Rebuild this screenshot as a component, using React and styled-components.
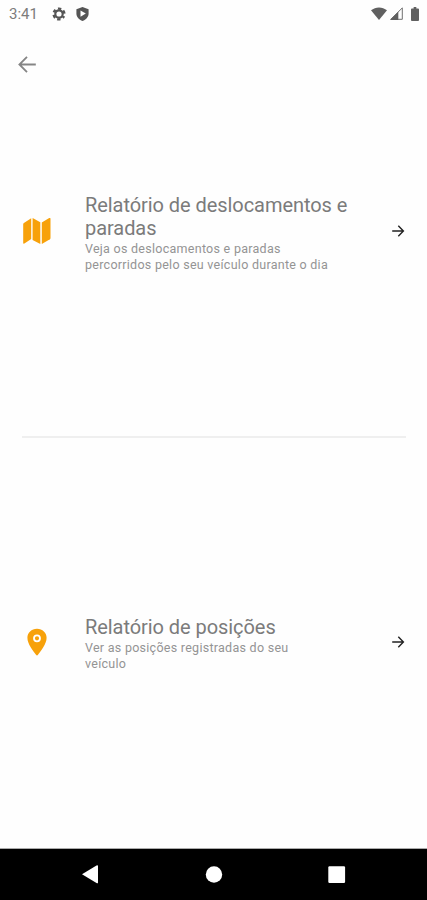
import React from "react";
import styled, { createGlobalStyle } from "styled-components";

const GlobalStyle = createGlobalStyle`
  * { box-sizing: border-box; }
  body { margin: 0; background: #fefefe; font-family: Roboto, sans-serif; }
`;

const Screen = styled.div`
  width: 427px;
  height: 900px;
  display: flex;
  flex-direction: column;
  background: #fefefe;
  position: relative;
  overflow: hidden;
`;

const StatusBar = styled.div`
  height: 27px;
  flex: none;
  display: flex;
  align-items: center;
  justify-content: space-between;
  padding: 0 8px 0 9px;
  color: #606060;
`;

const StatusGroup = styled.div`
  display: flex;
  align-items: center;
  gap: ${(p) => p.$gap}px;
  svg { display: block; }
`;

const Clock = styled.span`
  font-size: 15px;
  line-height: 25px;
  padding-top: 2px;
  width: 31px;
  margin-right: 1px;
  color: #7c7c7c;
`;

const BackButton = styled.button`
  position: absolute;
  left: 15px;
  top: 52px;
  width: 24px;
  height: 24px;
  padding: 0;
  border: 0;
  background: none;
  svg { display: block; }
`;

const Options = styled.main`
  flex: 1;
  display: grid;
  grid-template-rows: 1fr 1fr;
`;

const Option = styled.section`
  display: grid;
  grid-template-columns: 30px 1fr 14px;
  align-items: center;
  margin: 0 21px 0 22px;
  padding-right: 1px;
  border-bottom: 2px solid ${(p) => (p.$divided ? "#efefef" : "transparent")};
  svg { display: block; }
`;

const OptionText = styled.div`
  padding-left: 33px;
  padding-top: 4.3px;
`;

const Title = styled.h2`
  margin: 0;
  font-size: 20px;
  font-weight: 400;
  line-height: 23px;
  letter-spacing: -0.06px;
  color: #7b7b7b;
  white-space: nowrap;
`;

const Description = styled.p`
  margin: 1px 0 0;
  font-size: 12.5px;
  line-height: 15.5px;
  letter-spacing: 0.27px;
  color: #949494;
  white-space: nowrap;
`;

const NavBar = styled.nav`
  height: 52px;
  flex: none;
  border-top: 1px solid #aaa;
  background: #000;
  svg { display: block; }
`;

const MapIcon = () => (
  <svg width="30" height="30" viewBox="0 0 30 30" fill="#f7a10a">
    <path d="M1.2 8.2 Q1.2 7.4 1.9 7 L9.2 2.2 V23 L2.4 27.6 Q1.2 28.1 1.2 27Z" />
    <path d="M10.6 2 L18.3 6.2 V28 L10.6 24Z" />
    <path d="M19.8 6.5 L27.2 2.1 Q28.5 1.5 28.5 2.8 V22 Q28.5 22.8 27.9 23.2 L19.8 28Z" />
  </svg>
);

const PinIcon = () => (
  <svg width="30" height="30" viewBox="0 0 30 30" fill="#f7a10a">
    <path d="M15 1.7 C9.5 1.7 5.4 5.7 5.4 10.7 C5.4 17 11.4 24.2 14 27.8 Q15 29.1 16 27.8 C18.6 24.2 24.6 17 24.6 10.7 C24.6 5.7 20.5 1.7 15 1.7Z" />
    <circle cx="15" cy="11.3" r="3" fill="none" stroke="#fff" strokeWidth="1.8" />
  </svg>
);

const ForwardIcon = () => (
  <svg width="14" height="14" viewBox="0 0 14 14" fill="none" stroke="#222" strokeWidth="1.4">
    <path d="M1.2 7 H12.3 M7.3 1.8 L12.4 7 L7.3 12.2" />
  </svg>
);

const BackIcon = () => (
  <svg width="24" height="24" viewBox="0 0 24 24" fill="none" stroke="#858585" strokeWidth="1.8">
    <path d="M20.8 12.5 H4.5 M12 4.9 L4.4 12.5 L12 20.1" />
  </svg>
);

const GearIcon = () => (
  <svg width="14" height="14" viewBox="0 0 14 14" fill="none" stroke="#555">
    <circle cx="7" cy="7" r="3.7" strokeWidth="2.2" />
    <circle cx="7" cy="7" r="5.4" strokeWidth="2.4" strokeDasharray="3.1 2.555" strokeDashoffset="1.55" transform="rotate(30 7 7)" />
  </svg>
);

const ShieldIcon = () => (
  <svg width="13" height="14" viewBox="0 0 13 14">
    <path d="M6.5 0 L12.6 2.2 V6.5 C12.6 10 10 12.7 6.5 14 C3 12.7 .4 10 .4 6.5 V2.2Z" fill="#555" />
    <path d="M4.5 3.6 L9.8 6.6 L4.5 9.7Z" fill="#fff" />
  </svg>
);

const WifiIcon = () => (
  <svg width="16" height="13" viewBox="0 0 16 13" fill="#606060">
    <path d="M0 3.3 C4.6 -.6 11.4 -.6 16 3.3 L8 13Z" />
  </svg>
);

const SignalIcon = () => (
  <svg width="13" height="13" viewBox="0 0 13 13">
    <path d="M.8 12.3 L12.3 .9 V12.3Z" fill="none" stroke="#707070" />
    <path d="M0 13 L8.3 4.7 V13Z" fill="#606060" />
  </svg>
);

const BatteryIcon = () => (
  <svg width="8" height="14" viewBox="0 0 9 14" preserveAspectRatio="none" fill="#606060">
    <path d="M3 0 H6 V1.4 H8 Q9 1.4 9 2.4 V13 Q9 14 8 14 H1 Q0 14 0 13 V2.4 Q0 1.4 1 1.4 H3Z" />
  </svg>
);

const NavIcons = () => (
  <svg width="427" height="51" viewBox="0 0 427 51" fill="#fff">
    <path d="M82 25.2 L96.5 16.4 Q98 15.7 98 17 V33.4 Q98 34.7 96.5 34Z" />
    <circle cx="214" cy="25.5" r="8.2" />
    <rect x="328.3" y="17.2" width="16.8" height="16.8" rx="1.2" />
  </svg>
);

const OPTIONS = [
  {
    Icon: MapIcon,
    title: ["Relatório de deslocamentos e", "paradas"],
    description: ["Veja os deslocamentos e paradas", "percorridos pelo seu veículo durante o dia"],
  },
  {
    Icon: PinIcon,
    title: ["Relatório de posições"],
    description: ["Ver as posições registradas do seu", "veículo"],
  },
];

const Lines = ({ items }) =>
  items.map((line, i) => (
    <React.Fragment key={line}>
      {i > 0 && <br />}
      {line}
    </React.Fragment>
  ));

export default function App() {
  return (
    <>
      <GlobalStyle />
      <Screen>
        <StatusBar>
          <StatusGroup $gap={10.5}>
            <Clock>3:41</Clock>
            <GearIcon />
            <ShieldIcon />
          </StatusGroup>
          <StatusGroup $gap={8}>
            <StatusGroup $gap={3}>
              <WifiIcon />
              <SignalIcon />
            </StatusGroup>
            <BatteryIcon />
          </StatusGroup>
        </StatusBar>
        <BackButton aria-label="Voltar">
          <BackIcon />
        </BackButton>
        <Options>
          {OPTIONS.map(({ Icon, title, description }, index) => (
            <Option key={title[0]} $divided={index < OPTIONS.length - 1}>
              <Icon />
              <OptionText>
                <Title><Lines items={title} /></Title>
                <Description><Lines items={description} /></Description>
              </OptionText>
              <ForwardIcon />
            </Option>
          ))}
        </Options>
        <NavBar>
          <NavIcons />
        </NavBar>
      </Screen>
    </>
  );
}
